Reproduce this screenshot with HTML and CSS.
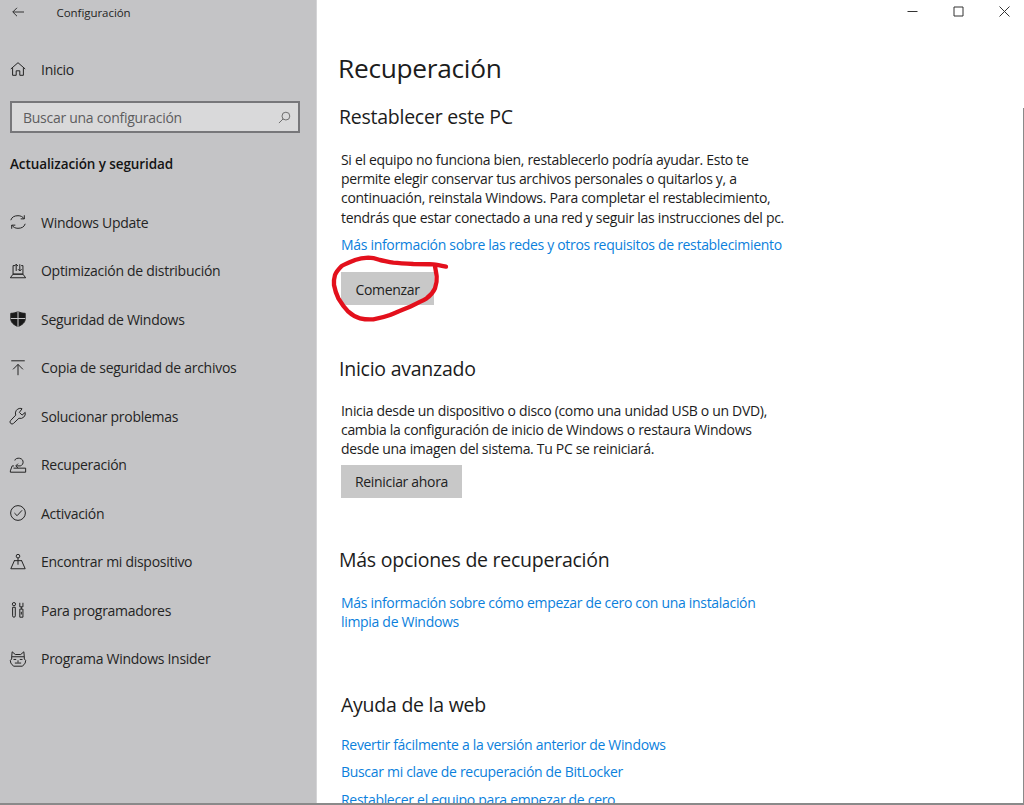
FILE: index.html
```html
<!DOCTYPE html>
<html lang="es">
<head>
<meta charset="utf-8">
<title>Configuración</title>
<link rel="stylesheet" href="styles.css">
</head>
<body>
<div class="window">
  <aside class="sidebar">
    <div class="titlebar">
      <svg class="back" viewBox="0 0 12 10"><path d="M12 5H.8M5 .8.8 5 5 9.200"/></svg>
      <span class="apptitle">Configuración</span>
    </div>
    <div class="navrow home">
      <svg class="ico" viewBox="0 0 20 20"><path d="M2 10 10 3l8 7M4 9v8h4v-5h4v5h4V9"/></svg>
      <span>Inicio</span>
    </div>
    <div class="search">
      <span>Buscar una configuración</span>
      <svg class="lens" viewBox="0 0 14 14"><circle cx="8.500" cy="5.500" r="4.200"/><path d="M5.500 8.500 1 13"/></svg>
    </div>
    <div class="section">Actualización y seguridad</div>
    <nav class="nav">
      <div class="navrow"><svg class="ico" viewBox="0 0 20 20"><path d="M2 8C3 4.500 6 3 10 3c3 0 5 1 7 3.500M18 12c-1 3.500-4 5-8 5-3 0-5-1-7-3.500M17 2.500v4h-4M3 17.500v-4h4"/></svg><span>Windows Update</span></div>
      <div class="navrow"><svg class="ico" viewBox="0 0 20 20"><path d="M4.500 4v9.500h11V4h-2M6.500 4h-2M1.500 17.500h17l-3-4h-11zM8 10V2.500M6 4.500l2-2 2 2M12 2.500V10M10 8l2 2 2-2"/></svg><span>Optimización de distribución</span></div>
      <div class="navrow"><svg class="ico solid" viewBox="0 0 20 20"><path d="M10 1.500c2 1.500 4.500 2.200 8 2.200V10c0 4-3.500 6.500-8 8.500C5.500 16.500 2 14 2 10V3.700c3.500 0 6-.7 8-2.200z"/><path class="cut" d="M10 1v18M2 9.500h16"/></svg><span>Seguridad de Windows</span></div>
      <div class="navrow"><svg class="ico" viewBox="0 0 20 20"><path d="M2.500 2h15M10 18V6M4.500 11.500 10 6l5.500 5.500"/></svg><span>Copia de seguridad de archivos</span></div>
      <div class="navrow"><svg class="ico" viewBox="0 0 20 20"><path d="M12 1.500a5.500 5.500 0 0 0-4.500 7.500L1.800 15a2 2 0 0 0 3.200 3.200L11 12.500a5.500 5.500 0 0 0 7-6.500l-3.500 3L11.500 6 14.500 2a5 5 0 0 0-2.500-.5z"/></svg><span>Solucionar problemas</span></div>
      <div class="navrow"><svg class="ico" viewBox="0 0 20 20"><path d="M6.500 5c0-3 7.500-4 9 .5.800 3-1 5-3 5.500H8M10 8.500 7.500 11l2.500 2.500M5.500 11H3.500l-2 5.500v1.500h17v-4.500H5"/></svg><span>Recuperación</span></div>
      <div class="navrow"><svg class="ico" viewBox="0 0 20 20"><circle cx="10" cy="10" r="8.200"/><path d="m6 10 3 3 5.500-6"/></svg><span>Activación</span></div>
      <div class="navrow"><svg class="ico" viewBox="0 0 20 20"><circle cx="10" cy="3.500" r="2"/><path d="M10 5.500V13M5.500 8.500h9M6 8.500 2 17.500h16l-4-9"/></svg><span>Encontrar mi dispositivo</span></div>
      <div class="navrow"><svg class="ico" viewBox="0 0 20 20"><circle cx="5.500" cy="3.500" r="1.800"/><path d="M4 7h3v9.500a1.500 1.500 0 0 1-3 0zM12 2v4.500h3.500V2M13.700 6.500V9M12 9h3.500v9H12zM13.700 12v3"/></svg><span>Para programadores</span></div>
      <div class="navrow"><svg class="ico" viewBox="0 0 20 20"><path d="M3.500 2 7 5h6l3.500-3 .5 5.500V10l1.500 1.500-.5 3-3 3.500H5l-3-3.500-.5-3L3 10V7.500zM3 7.500h14M5 10.500h3M12 10.500h3M10 11.500v2.500M6.500 14.500h7"/></svg><span>Programa Windows Insider</span></div>
    </nav>
  </aside>
  <main class="content">
    <div class="controls">
      <svg class="ctl" viewBox="0 0 11 11"><path d="M.5 5.500h10"/></svg>
      <svg class="ctl" viewBox="0 0 11 11"><path d="M1 1h9v9H1z"/></svg>
      <svg class="ctl" viewBox="0 0 11 11"><path d="m.5.500 10 10M10.500.500l-10 10"/></svg>
    </div>
    <div class="scrollbar"></div>
    <h1>Recuperación</h1>
    <h2>Restablecer este PC</h2>
    <p class="para first">Si el equipo no funciona bien, restablecerlo podría ayudar. Esto te<br>permite elegir conservar tus archivos personales o quitarlos y, a<br>continuación, reinstala Windows. Para completar el restablecimiento,<br>tendrás que estar conectado a una red y seguir las instrucciones del pc.</p>
    <a class="link more">Más información sobre las redes y otros requisitos de restablecimiento</a>
    <div class="btnwrap">
      <button class="btn start">Comenzar</button>
      <svg class="scribble" viewBox="0 0 480 300"><path d="M378 80C365 77 352 74 340 73 320 72 300 72 280 72 260 71 240 70 220 68 205 66 192 62 180 60 168 56 156 53 145 53 130 54 118 56 105 60 90 66 76 71 65 78 56 87 49 95 45 105 42 115 41 125 42 135 45 150 49 163 55 175 64 190 74 204 85 215 96 225 108 232 120 235 133 238 146 239 160 238 177 235 194 231 210 225 230 216 250 208 270 200 287 192 304 184 320 175 332 166 340 156 345 145 349 133 351 121 350 110 349 100 347 90 345 80"/></svg>
    </div>
    <h2 class="s2">Inicio avanzado</h2>
    <p class="para adv">Inicia desde un dispositivo o disco (como una unidad USB o un DVD),<br>cambia la configuración de inicio de Windows o restaura Windows<br>desde una imagen del sistema. Tu PC se reiniciará.</p>
    <button class="btn restart">Reiniciar ahora</button>
    <h2 class="s3">Más opciones de recuperación</h2>
    <a class="link clean">Más información sobre cómo empezar de cero con una instalación<br>limpia de Windows</a>
    <h2 class="s4">Ayuda de la web</h2>
    <div class="weblinks">
      <a class="link">Revertir fácilmente a la versión anterior de Windows</a>
      <a class="link">Buscar mi clave de recuperación de BitLocker</a>
      <a class="link">Restablecer el equipo para empezar de cero</a>
    </div>
  </main>
</div>
</body>
</html>
```
FILE: styles.css
```css
* { box-sizing: border-box; }
html, body { margin: 0; height: 100%; overflow: hidden; background: #fff; }
body { font-family: "Open Sans", "Noto Sans", sans-serif; color: #1c1c1c; }
.window { display: flex; width: 1024px; height: 805px; border-bottom: 2px solid #8a8a8a; overflow: hidden; }

.sidebar { width: 316.500px; flex: none; background: #c4c4c6; border-right: 1px solid #d4d4d6; font-size: 14px; letter-spacing: -.28px; color: #242424; }
.titlebar { height: 24px; display: flex; align-items: center; }
.back { width: 12px; height: 10px; margin-left: 11.500px; fill: none; stroke: #333; stroke-width: 1; }
.apptitle { margin-left: 33px; font-size: 11.500px; letter-spacing: -.05px; }
.navrow { height: 48.500px; display: flex; align-items: center; padding-left: 9px; }
.navrow span { margin-left: 14px; }
.home { margin-top: 21px; height: 48px; }
.ico { width: 18px; height: 18px; fill: none; stroke: #222; stroke-width: 1.100; flex: none; }
.ico.solid { fill: #1a1a1a; }
.ico .cut { stroke: #c4c4c6; stroke-width: 1.200; fill: none; }
.search { margin: 8px 0 0 10px; width: 290px; height: 32px; border: 2px solid #77777a; background: #d9d9da; display: flex; align-items: center; justify-content: space-between; padding: 0 7px 0 11px; color: #5d5d5f; }
.lens { width: 13px; height: 13px; fill: none; stroke: #666; stroke-width: 1; }
.section { margin: 21px 0 0 10px; height: 20px; line-height: 20px; font-weight: 600; color: #141414; font-size: 13.500px; letter-spacing: -.09px; }
.nav { margin-top: 24px; }

.content { flex: 1; position: relative; padding: 50px 0 0 22.500px; font-size: 14px; letter-spacing: -.31px; }
.controls { position: absolute; top: 6px; right: 14.500px; display: flex; gap: 35px; }
.ctl { width: 11px; height: 11px; fill: none; stroke: #333; stroke-width: 1; }
.scrollbar { position: absolute; top: 108px; right: 0; width: 1px; bottom: 0; background: #8a8a8a; }
h1 { margin: 0 0 0 -1px; font-size: 26.300px; line-height: 36px; font-weight: 400; letter-spacing: -.3px; }
h2 { margin: 18px 0 0; font-size: 19.500px; line-height: 26px; font-weight: 400; letter-spacing: -.25px; }
.para { margin: 0 0 0 2px; line-height: 19.200px; }
.para.first { margin-top: 20px; }
.link { display: block; margin-left: 2px; color: #0b7fdc; line-height: 19px; }
.more { margin-top: 8px; }
.btn { display: block; border: 0; padding: 0; margin: 0; background: #c8c8c8; color: #222; font: inherit; letter-spacing: inherit; height: 32.500px; text-align: center; }
.btnwrap { position: relative; margin: 18.500px 0 0 2px; }
.start { width: 93px; padding-top: 2px; }
.scribble { position: absolute; left: -21px; top: -32.500px; width: 160px; height: 100px; fill: none; stroke: #e3101c; stroke-width: 13; stroke-linecap: round; stroke-linejoin: round; }
h2.s2 { margin-top: 51px; }
.para.adv { margin-top: 19px; }
.restart { width: 121px; margin: 7px 0 0 2px; }
h2.s3 { margin-top: 49px; }
.clean { margin-top: 20px; }
h2.s4 { margin-top: 61px; margin-left: 2px; }
.weblinks { margin-top: 17px; display: flex; flex-direction: column; gap: 8.500px; }
```
